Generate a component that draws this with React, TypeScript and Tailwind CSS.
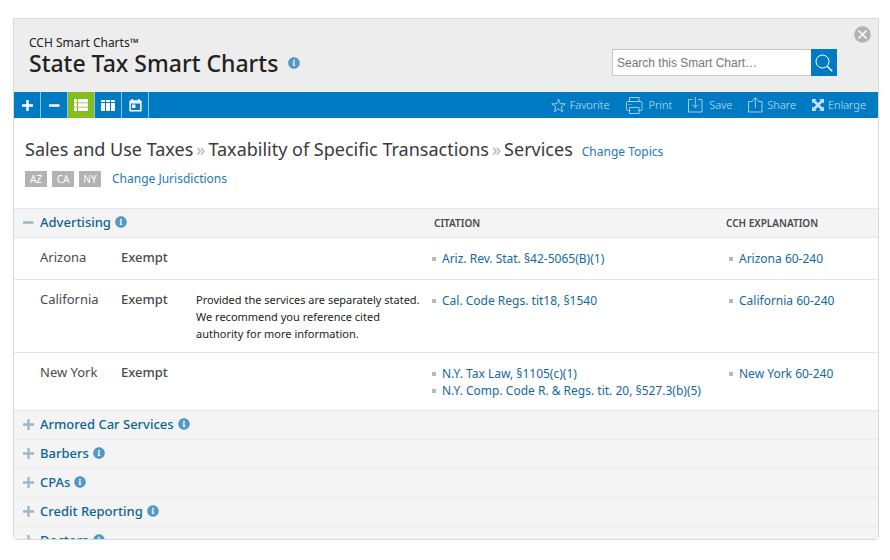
import React, { useState } from "react";
import { FaInfoCircle } from "react-icons/fa";

const SANS = "font-['Noto_Sans','Open_Sans',sans-serif]";

function Info({ label }: { label: string }) {
  return (
    <button type="button" aria-label={`About ${label}`} className="shrink-0 text-[#5498c8]">
      <FaInfoCircle className="size-3" />
    </button>
  );
}

function PlusIcon() {
  return (
    <svg viewBox="0 0 11 11" className="size-[11px]" fill="currentColor">
      <path d="M4.300 0h2.400v4.300h4.300v2.400h-4.300v4.300h-2.400v-4.300h-4.300v-2.400h4.300z" />
    </svg>
  );
}
function MinusIcon() {
  return (
    <svg viewBox="0 0 11 11" className="size-[11px]" fill="currentColor">
      <path d="M0 4.300h10.500v2.400h-10.500z" />
    </svg>
  );
}
function ListIcon() {
  return (
    <svg viewBox="0 0 14 12" className="h-3 w-3.5" fill="currentColor">
      <path d="M0 0h3v3.400H0zM4 0h10v3.400H4zM0 4.300h3v3.400H0zM4 4.300h10v3.400H4zM0 8.600h3v3.400H0zM4 8.600h10v3.400H4z" />
    </svg>
  );
}
function ColumnsIcon() {
  return (
    <svg viewBox="0 0 14 11" className="h-[11px] w-3.5" fill="currentColor">
      <path d="M0 0h4v2H0zM5 0h4v2H5zM10 0h4v2h-4zM0 3h4v8H0zM5 3h4v8H5zM10 3h4v8h-4z" />
    </svg>
  );
}
function CalendarIcon() {
  return (
    <svg viewBox="0 0 13 13" className="size-[13px]" fill="currentColor">
      <path
        fillRule="evenodd"
        d="M2.5 0h1.6v1.2h4.8V0h1.6v1.2H11.5Q12.6 1.2 12.6 2.4V11.4Q12.6 12.6 11.5 12.6H1.5Q.4 12.6.4 11.4V2.4Q.4 1.2 1.5 1.2h1zM1.9 4.4v6.7h9.2V4.4zM3 5.6h3.4V9H3z"
      />
    </svg>
  );
}
function StarIcon() {
  return (
    <svg viewBox="0 0 15 15" className="size-[15px]" fill="none" stroke="currentColor" strokeWidth="0.8">
      <path d="M7.500 1l1.700 4.800h5.100l-4.100 3.100 1.500 5-4.200-3-4.200 3 1.500-5L.7 5.800h5.100z" />
    </svg>
  );
}
function PrintIcon() {
  return (
    <svg viewBox="0 0 17 17" className="size-[17px]" fill="none" stroke="currentColor" strokeWidth="0.8">
      <path d="M3.500 4.500v-4h9.500v4M3.500 13.500h-2q-1 0-1-1v-7q0-1 1-1h13.500q1 0 1 1v7q0 1-1 1h-2M3.500 10.500h9.500v6h-9.500zM2.500 7.500h1M4.500 7.500h1" />
    </svg>
  );
}
function SaveIcon() {
  return (
    <svg viewBox="0 0 15 16" className="h-4 w-[15px]" fill="none" stroke="currentColor" strokeWidth="0.8">
      <path d="M4.500 2.500h-4v12.500h13.500v-12.500h-4M7.300 0v10.500M4.300 7.500l3 3 3-3" />
    </svg>
  );
}
function ShareIcon() {
  return (
    <svg viewBox="0 0 15 16" className="h-4 w-[15px]" fill="none" stroke="currentColor" strokeWidth="0.8">
      <path d="M4.500 4.500h-4v10.500h13.500v-10.500h-4M7.300 11v-10.300M4.300 3.700l3-3 3 3" />
    </svg>
  );
}
function EnlargeIcon() {
  return (
    <svg viewBox="0 0 12 12" className="size-3" fill="currentColor">
      <path d="M0 0h4.500L3.200 1.300 6 4.100l2.800-2.800L7.500 0H12v4.500l-1.300-1.300L7.900 6l2.800 2.800L12 7.500V12H7.500l1.300-1.300L6 7.900l-2.800 2.800L4.500 12H0V7.500l1.300 1.300L4.100 6 1.300 3.200 0 4.500z" />
    </svg>
  );
}

const views = [
  { label: "Expand all", icon: <PlusIcon /> },
  { label: "Collapse all", icon: <MinusIcon /> },
  { label: "List view", icon: <ListIcon /> },
  { label: "Column view", icon: <ColumnsIcon /> },
  { label: "Calendar view", icon: <CalendarIcon /> },
];

const actions = [
  { label: "Favorite", icon: <StarIcon />, gap: "gap-1" },
  { label: "Print", icon: <PrintIcon />, gap: "gap-1.5" },
  { label: "Save", icon: <SaveIcon />, gap: "gap-1.5" },
  { label: "Share", icon: <ShareIcon />, gap: "gap-1" },
  { label: "Enlarge", icon: <EnlargeIcon />, gap: "gap-1" },
];

const rows = [
  { state: "Arizona", status: "Exempt", note: "", cites: ["Ariz. Rev. Stat. §42-5065(B)(1)"], expl: "Arizona 60-240", size: "h-[42px]" },
  {
    state: "California",
    status: "Exempt",
    note: "Provided the services are separately stated. We recommend you reference cited authority for more information.",
    cites: ["Cal. Code Regs. tit18, §1540"],
    expl: "California 60-240",
    size: "h-[73px]",
  },
  {
    state: "New York",
    status: "Exempt",
    note: "",
    cites: ["N.Y. Tax Law, §1105(c)(1)", "N.Y. Comp. Code R. & Regs. tit. 20, §527.3(b)(5)"],
    expl: "New York 60-240",
    size: "h-[58px]",
  },
];

const topics = ["Armored Car Services", "Barbers", "CPAs", "Credit Reporting", "Doctors"];

function Bullets({ items }: { items: string[] }) {
  return (
    <ul className="text-xs">
      {items.map((t) => (
        <li key={t} className="flex items-center gap-1.5 whitespace-nowrap leading-[17px]">
          <span className="size-1 bg-[#b9b9b9]" />
          <a href="#" className="text-[#12699f]">{t}</a>
        </li>
      ))}
    </ul>
  );
}

function TopicHead({ name, open }: { name: string; open?: boolean }) {
  return (
    <div className="flex items-center pb-0.5 pl-[9px] text-[13px] font-medium leading-5">
      <button type="button" className="flex items-center gap-1.5 text-[#0a6496]" aria-expanded={!!open}>
        <span className="text-[#9bb7cb]">{open ? <MinusIcon /> : <PlusIcon />}</span>
        {name}
      </button>
      <span className="ml-1 flex">
        <Info label={name} />
      </span>
    </div>
  );
}

export default function App() {
  const [view, setView] = useState(2);
  return (
    <div className={`flex h-screen flex-col bg-white pb-5 pl-[13px] pr-[11px] pt-[18px] ${SANS}`}>
      <main className="flex min-h-0 flex-1 flex-col overflow-hidden rounded-b-sm border border-[#d9d9dc]">
        <header className="flex shrink-0 items-start bg-[#ededed] pb-4 pl-[15px] pr-[7px] pt-[7px]">
          <div className="flex-1 pt-2.5 text-[#222]">
            <p className="text-xs leading-[14px]">CCH Smart Charts™</p>
            <div className="flex items-center gap-2.5">
              <h1 className="text-[23px] font-medium leading-[26px]">State Tax Smart Charts</h1>
              <Info label="State Tax Smart Charts" />
            </div>
          </div>
          <form className="mt-[23px] flex" onSubmit={(e) => e.preventDefault()}>
            <input
              type="search"
              aria-label="Search this Smart Chart"
              placeholder="Search this Smart Chart…"
              className="h-[27px] w-[199px] border border-r-0 border-[#c6c6c6] bg-white px-1 font-['Liberation_Sans',Arial,sans-serif] text-xs text-[#333] outline-none placeholder:text-[#777]"
            />
            <button type="submit" aria-label="Search" className="flex h-[27px] w-[26px] items-center justify-center bg-[#007ac3] text-white">
              <svg viewBox="0 0 18 18" className="size-[18px]" fill="none" stroke="currentColor" strokeWidth="1">
                <circle cx="7.500" cy="7.500" r="6.500" />
                <path d="M12.200 12.200l5 5" strokeWidth="1.600" />
              </svg>
            </button>
          </form>
          <button type="button" aria-label="Close" className="ml-[17px] text-[#b3b3b3]">
            <svg viewBox="0 0 17 17" className="size-[17px]">
              <circle cx="8.500" cy="8.500" r="8.300" fill="currentColor" />
              <path d="M4.500 4.500l8 8M12.500 4.500l-8 8" stroke="#fff" strokeWidth="1.500" />
            </svg>
          </button>
        </header>

        <div className="flex h-[26px] shrink-0 items-stretch bg-[#007ac3] text-white">
          {views.map((v, i) => (
            <button
              key={v.label}
              type="button"
              aria-label={v.label}
              aria-pressed={view === i}
              onClick={() => setView(i)}
              className={`flex w-[27px] items-center justify-center border-r border-[#8fc4e4] ${view === i ? "bg-[#85bc20]" : ""}`}
            >
              {v.icon}
            </button>
          ))}
          <div className="ml-auto flex items-center gap-4 pr-3 text-[11px] font-light text-[#c5e2f3]">
            {actions.map((a) => (
              <button key={a.label} type="button" className={`flex items-center ${a.gap}`}>
                {a.icon}
                {a.label}
              </button>
            ))}
          </div>
        </div>

        <section className="shrink-0 px-[11px] pb-5 pt-[18px]">
          <nav aria-label="Topic" className="flex items-baseline gap-[3px] whitespace-nowrap text-lg leading-[26px] text-[#3a3a3a]">
            <span>Sales and Use Taxes</span>
            <span className="text-[#b5b5b5]">»</span>
            <span>Taxability of Specific Transactions</span>
            <span className="text-[#b5b5b5]">»</span>
            <span>Services</span>
            <a href="#" className="ml-1.5 text-xs text-[#1c78b8]">Change Topics</a>
          </nav>
          <div className="mt-2 flex items-center gap-[5px]">
            {["AZ", "CA", "NY"].map((s) => (
              <span key={s} className="h-4 w-[22px] bg-[#b3b3b3] text-center text-[10px] leading-4 text-white">{s}</span>
            ))}
            <a href="#" className="ml-1.5 text-xs leading-[18px] text-[#1c78b8]">Change Jurisdictions</a>
          </div>
        </section>

        <div className="min-h-0 flex-1 overflow-hidden">
          <table className="w-full table-fixed border-collapse text-left text-[13px]">
            <colgroup>
              <col className="w-[107px]" />
              <col className="w-[75px]" />
              <col />
              <col className="w-[294px]" />
              <col className="w-[152px]" />
            </colgroup>
            <thead>
              <tr className="h-[29px] border-y border-[#e4e4ec] bg-[#f4f4f4] text-[10px] text-[#4a4a4a]">
                <th scope="colgroup" colSpan={3}><TopicHead name="Advertising" open /></th>
                <th scope="col" className="pl-0.5 font-semibold">CITATION</th>
                <th scope="col" className="font-semibold">CCH EXPLANATION</th>
              </tr>
            </thead>
            <tbody>
              {rows.map((r) => (
                <tr key={r.state} className={`border-b border-[#e4e4ea] align-top text-[#4a4a4a] ${r.size}`}>
                  <th scope="row" className="pl-[26px] pt-2.5 font-normal leading-[18px]">{r.state}</th>
                  <td className="pt-2.5 font-medium leading-[18px]">{r.status}</td>
                  <td className="pr-2 pt-[11px] text-[11px] leading-[17px] text-[#222]">{r.note}</td>
                  <td className="pt-3"><Bullets items={r.cites} /></td>
                  <td className="pl-[3px] pt-3"><Bullets items={[r.expl]} /></td>
                </tr>
              ))}
              {topics.map((t) => (
                <tr key={t} className="h-[29px] border-b border-[#e9e9f1] bg-[#f4f4f4]">
                  <th scope="rowgroup" colSpan={5}><TopicHead name={t} /></th>
                </tr>
              ))}
            </tbody>
          </table>
        </div>
      </main>
    </div>
  );
}
